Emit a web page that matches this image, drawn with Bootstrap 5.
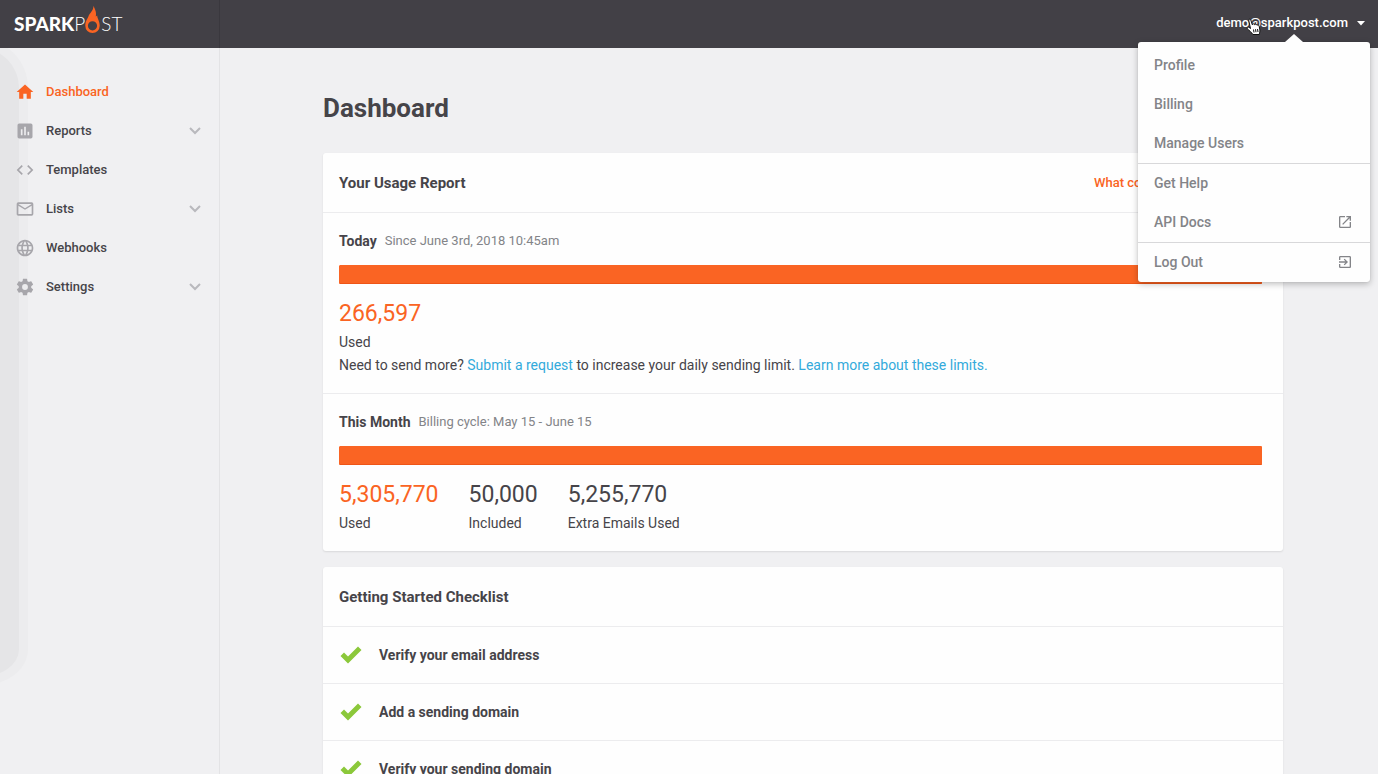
<!DOCTYPE html>
<html lang="en">
<head>
<meta charset="utf-8">
<meta name="viewport" content="width=device-width, initial-scale=1">
<title>Dashboard | SparkPost</title>
<link href="https://cdn.jsdelivr.net/npm/bootstrap@5.3.0/dist/css/bootstrap.min.css" rel="stylesheet">
<style>
  :root { --ink: #464449; --orange: #fa6423; --muted: #838488; --rule: #ececee; }
  body { font-family: "Roboto", "Liberation Sans", sans-serif; font-size: 14px; line-height: 24px; color: var(--ink); background: #f0f0f2; }
  a { text-decoration: none; }
  .topbar { height: 48px; background: #424046; z-index: 10; }
  .logo-area { width: 220px; border-right: 1px solid #3a383e; padding: 0 14px; }
  .brand { font-family: Lato, sans-serif; font-size: 19px; line-height: 24px; color: #fff; }
  .brand b { font-weight: 900; }
  .brand span { font-weight: 300; }
  .brand svg { margin: -8px 0 0 -1px; }
  .account { height: 46px; padding: 0 8px; font-size: 13px; font-weight: 500; color: #fff; border: 0; background: none; line-height: 24px; }
  .account::after { display: none; }
  .account-menu { top: 42px; right: 8px; width: 232px; padding: 4px 0 0; border: 0; border-radius: 3px; background: #fefefe; box-shadow: 0 2px 6px rgba(0,0,0,.25), 0 0 1px rgba(0,0,0,.2); }
  .account-menu::before { content: ""; position: absolute; top: -8px; right: 67px; border: 9px solid transparent; border-top: 0; border-bottom: 8px solid #fefefe; }
  .account-menu .dropdown-item { display: flex; align-items: center; justify-content: space-between; height: 39px; padding: 0 17px 2px 16px; font-size: 14px; font-weight: 500; color: var(--muted); }
  .account-menu hr { margin: 0; border-color: #d8d8da; opacity: 1; }
  .pointer { top: 18px; right: 117px; z-index: 20; pointer-events: none; }
  .sidebar { width: 220px; border-right: 1px solid #e3e3e5; padding-top: 24px; }
  .edge-shade { top: 0; left: -60px; width: 79px; height: 629px; background: #e5e5e7; border-radius: 40px 40px 40px 40px / 40px 40px 28px 28px; box-shadow: 0 0 0 9px #ececee; }
  .side-link { height: 39px; padding: 0 18px 0 15px; gap: 11px; font-size: 13px; font-weight: 500; color: var(--ink); }
  .side-link svg { fill: #a7a6ab; }
  .side-link .chev { fill: none; stroke: #b9b9bd; stroke-width: 2; margin-left: auto; }
  .side-link.active, .side-link.active svg { color: var(--orange); fill: var(--orange); }
  .content { padding: 44px 16px 16px 24px; scrollbar-width: none; }
  .content-inner { max-width: 960px; }
  h1 { font-size: 26px; line-height: 32px; font-weight: 700; margin-bottom: 29px; }
  .panel { background: #fefefe; border-radius: 3px; box-shadow: 0 1px 2px rgba(0,0,0,.1); margin-bottom: 16px; }
  .panel > * { padding-left: 16px; padding-right: 16px; }
  .panel > * + * { border-top: 1px solid var(--rule); }
  .panel-head { height: 59px; }
  .panel-link { font-size: 13px; font-weight: 500; }
  h2 { font-size: 15px; line-height: 24px; font-weight: 700; margin: 0; }
  h3 { font-size: 14px; line-height: 24px; font-weight: 700; margin: 0; }
  .subtle { font-size: 13px; color: var(--muted); }
  .usage { padding-top: 16px; padding-bottom: 16px; }
  .usage .progress { height: 19px; margin: 12px 0 14px; border-radius: 1px; background: none; }
  .usage .progress-bar { background: var(--orange); border-bottom: 1px solid #ee5517; border-radius: 1px; }
  .figures { gap: 30px; }
  .figure-num { font-size: 23px; line-height: 32px; }
  .hot { color: var(--orange); }
  .help { line-height: 23px; }
  .help a { color: #33aadb; }
  .task { height: 57px; gap: 17px; }
</style>
</head>
<body class="vh-100 d-flex flex-column overflow-hidden">
<header class="topbar d-flex justify-content-between position-relative flex-shrink-0">
  <div class="logo-area d-flex align-items-center">
    <a href="#" class="brand d-flex align-items-center" aria-label="SparkPost"><b>SPARK</b><span>P</span><svg width="17" height="30" viewBox="0 0 17 30"><path fill="#fa6423" fill-rule="evenodd" d="M9.500.8C10.600 4 12.800 6.500 11.800 11.600L13.200 10.500C13.200 13.500 15.700 16 15.700 20.800A7.200 7.200 0 0 1 1.300 20.800C1.300 16 3.200 14.500 4.400 11.500C5.500 8 9.500 6 9.500.8ZM8.500 16.200A4.600 4.600 0 1 0 8.500 25.400A4.600 4.600 0 1 0 8.500 16.200Z"/></svg><span>ST</span></a>
  </div>
  <div class="dropdown">
    <button class="account dropdown-toggle d-flex align-items-center" type="button" aria-expanded="true">demo@sparkpost.com <svg class="ms-2 me-1" width="10" height="5" viewBox="0 0 10 5"><path fill="#fff" d="M1 0h8L5 4.500z"/></svg></button>
    <svg class="pointer position-absolute" width="15" height="18" viewBox="0 0 15 18"><path fill="#fff" stroke="#111" stroke-width="1" d="M4.500 10.500 2.800 2.800C2.500 1 4.300.700 4.800 2L6.300 6.800C6.800 5.500 8.200 5.600 8.600 6.700 9.300 5.800 10.500 6 10.900 7.200 11.800 6.600 13 7.200 13.200 8.300L13.900 12C14 13.800 13.500 14.500 13.300 16.500H6.800C5.500 14 3 12.500 1.300 10.700.600 9.500 1.800 8.600 3 9.300Z"/><path stroke="#111" stroke-width="1" d="M7.500 11.500l.5 3M9.500 11.200l.5 3M11.500 11l.5 3"/></svg>
    <div class="dropdown-menu show account-menu">
      <a class="dropdown-item" href="#">Profile</a>
      <a class="dropdown-item" href="#">Billing</a>
      <a class="dropdown-item" href="#">Manage Users</a>
      <hr>
      <a class="dropdown-item" href="#">Get Help</a>
      <a class="dropdown-item" href="#">API Docs <svg width="16" height="16" viewBox="0 0 24 24" fill="currentColor"><path d="M19 19H5V5h7V3H5a2 2 0 0 0-2 2v14a2 2 0 0 0 2 2h14c1.100 0 2-.9 2-2v-7h-2v7zM14 3v2h3.590l-9.830 9.830 1.410 1.410L19 6.410V10h2V3h-7z"/></svg></a>
      <hr>
      <a class="dropdown-item" href="#">Log Out <svg width="16" height="16" viewBox="0 0 24 24" fill="currentColor"><path d="M10.090 15.590 11.500 17l5-5-5-5-1.410 1.410L12.670 11H3v2h9.670l-2.580 2.590zM19 3H5a2 2 0 0 0-2 2v4h2V5h14v14H5v-4H3v4a2 2 0 0 0 2 2h14c1.100 0 2-.9 2-2V5c0-1.100-.9-2-2-2z"/></svg></a>
    </div>
  </div>
</header>
<div class="d-flex flex-grow-1 overflow-hidden">
  <aside class="sidebar position-relative flex-shrink-0 overflow-hidden">
    <div class="edge-shade position-absolute"></div>
    <nav class="position-relative d-flex flex-column">
      <a href="#" class="side-link active d-flex align-items-center"><svg width="20" height="20" viewBox="0 0 24 24"><path d="M10 20v-6h4v6h5v-8h3L12 3 2 12h3v8z"/></svg>Dashboard</a>
      <a href="#" class="side-link d-flex align-items-center"><svg width="20" height="20" viewBox="0 0 24 24"><path d="M19 3H5a2 2 0 0 0-2 2v14a2 2 0 0 0 2 2h14a2 2 0 0 0 2-2V5a2 2 0 0 0-2-2zM9 17H7v-7h2v7zm4 0h-2V7h2v10zm4 0h-2v-4h2v4z"/></svg>Reports<svg class="chev" width="12" height="8" viewBox="0 0 12 8"><path d="M1 1l5 5 5-5"/></svg></a>
      <a href="#" class="side-link d-flex align-items-center"><svg width="20" height="20" viewBox="0 0 24 24"><path d="M9.400 16.600 4.800 12l4.600-4.600L8 6l-6 6 6 6 1.400-1.400zm5.200 0 4.600-4.600-4.600-4.600L16 6l6 6-6 6-1.400-1.400z"/></svg>Templates</a>
      <a href="#" class="side-link d-flex align-items-center"><svg width="20" height="20" viewBox="0 0 24 24"><path d="M20 4H4a2 2 0 0 0-2 2v12c0 1.100.9 2 2 2h16a2 2 0 0 0 2-2V6a2 2 0 0 0-2-2zm0 14H4V8l8 5 8-5v10zm-8-7L4 6h16l-8 5z"/></svg>Lists<svg class="chev" width="12" height="8" viewBox="0 0 12 8"><path d="M1 1l5 5 5-5"/></svg></a>
      <a href="#" class="side-link d-flex align-items-center"><svg width="20" height="20" viewBox="0 0 24 24"><path d="M11.990 2C6.470 2 2 6.480 2 12s4.470 10 9.990 10C17.520 22 22 17.520 22 12S17.520 2 11.990 2zm6.930 6h-2.950a15.650 15.650 0 0 0-1.380-3.560A8.030 8.030 0 0 1 18.920 8zM12 4.040c.83 1.200 1.480 2.530 1.910 3.960h-3.820c.43-1.430 1.080-2.760 1.910-3.960zM4.260 14C4.100 13.360 4 12.690 4 12s.1-1.360.26-2h3.380c-.08.66-.14 1.320-.14 2s.06 1.340.14 2H4.260zm.82 2h2.950c.32 1.250.78 2.450 1.380 3.560A7.990 7.990 0 0 1 5.080 16zm2.950-8H5.080a7.990 7.990 0 0 1 4.330-3.560A15.650 15.650 0 0 0 8.030 8zM12 19.960c-.83-1.200-1.480-2.530-1.910-3.960h3.820c-.43 1.430-1.080 2.760-1.910 3.960zM14.340 14H9.660c-.09-.66-.16-1.320-.16-2s.07-1.350.16-2h4.680c.09.65.16 1.320.16 2s-.07 1.340-.16 2zm.25 5.560c.6-1.110 1.060-2.310 1.380-3.560h2.950a8.030 8.030 0 0 1-4.330 3.560zM16.360 14c.08-.66.14-1.320.14-2s-.06-1.340-.14-2h3.380c.16.64.26 1.310.26 2s-.1 1.360-.26 2h-3.380z"/></svg>Webhooks</a>
      <a href="#" class="side-link d-flex align-items-center"><svg width="20" height="20" viewBox="0 0 24 24"><path d="M19.430 12.980c.04-.32.07-.64.07-.98s-.03-.66-.07-.98l2.110-1.650c.19-.15.24-.42.12-.64l-2-3.460c-.12-.22-.39-.3-.61-.22l-2.490 1c-.52-.4-1.080-.73-1.690-.98l-.38-2.650A.49.490 0 0 0 14 2h-4c-.25 0-.46.180-.49.420l-.38 2.650c-.61.25-1.170.59-1.690.98l-2.490-1c-.23-.09-.49 0-.61.220l-2 3.460c-.13.220-.07.490.12.640l2.110 1.650c-.04.320-.07.650-.07.980s.03.660.07.980l-2.110 1.650c-.19.150-.24.420-.12.640l2 3.460c.12.220.39.300.61.220l2.490-1c.52.400 1.080.730 1.690.980l.38 2.650c.03.240.24.420.49.420h4c.25 0 .46-.18.490-.42l.38-2.650c.61-.25 1.170-.59 1.690-.98l2.490 1c.23.090.49 0 .61-.22l2-3.460c.12-.22.07-.49-.12-.64l-2.110-1.650zM12 15.500a3.500 3.500 0 1 1 0-7 3.500 3.500 0 0 1 0 7z"/></svg>Settings<svg class="chev" width="12" height="8" viewBox="0 0 12 8"><path d="M1 1l5 5 5-5"/></svg></a>
    </nav>
  </aside>
  <main class="content flex-grow-1 overflow-auto">
    <div class="content-inner mx-auto">
      <h1>Dashboard</h1>
      <section class="panel">
        <div class="panel-head d-flex align-items-center justify-content-between">
          <h2>Your Usage Report</h2>
          <a href="#" class="panel-link hot">What counts as a used email?</a>
        </div>
        <div class="usage">
          <div class="d-flex gap-2"><h3>Today</h3><span class="subtle">Since June 3rd, 2018 10:45am</span></div>
          <div class="progress"><div class="progress-bar" style="width:99.5%"></div></div>
          <div class="figure-num hot">266,597</div>
          <div>Used</div>
          <div class="help">Need to send more? <a href="#">Submit a request</a> to increase your daily sending limit. <a href="#">Learn more about these limits.</a></div>
        </div>
        <div class="usage">
          <div class="d-flex gap-2"><h3>This Month</h3><span class="subtle">Billing cycle: May 15 - June 15</span></div>
          <div class="progress"><div class="progress-bar" style="width:99.5%"></div></div>
          <div class="d-flex figures">
            <div><div class="figure-num hot">5,305,770</div>Used</div>
            <div><div class="figure-num">50,000</div>Included</div>
            <div><div class="figure-num">5,255,770</div>Extra Emails Used</div>
          </div>
        </div>
      </section>
      <section class="panel">
        <div class="panel-head d-flex align-items-center"><h2>Getting Started Checklist</h2></div>
        <div class="task d-flex align-items-center"><svg width="23" height="20" viewBox="0 0 23 20"><path fill="#8bc83a" d="M1.500 11l3.500-3.500L9 11.500 19 1.500 22.500 5 9 18.500z"/></svg><h3>Verify your email address</h3></div>
        <div class="task d-flex align-items-center"><svg width="23" height="20" viewBox="0 0 23 20"><path fill="#8bc83a" d="M1.500 11l3.500-3.500L9 11.500 19 1.500 22.500 5 9 18.500z"/></svg><h3>Add a sending domain</h3></div>
        <div class="task d-flex align-items-center"><svg width="23" height="20" viewBox="0 0 23 20"><path fill="#8bc83a" d="M1.500 11l3.500-3.500L9 11.500 19 1.500 22.500 5 9 18.500z"/></svg><h3>Verify your sending domain</h3></div>
      </section>
    </div>
  </main>
</div>
<script src="https://cdn.jsdelivr.net/npm/bootstrap@5.3.0/dist/js/bootstrap.bundle.min.js"></script>
</body>
</html>
